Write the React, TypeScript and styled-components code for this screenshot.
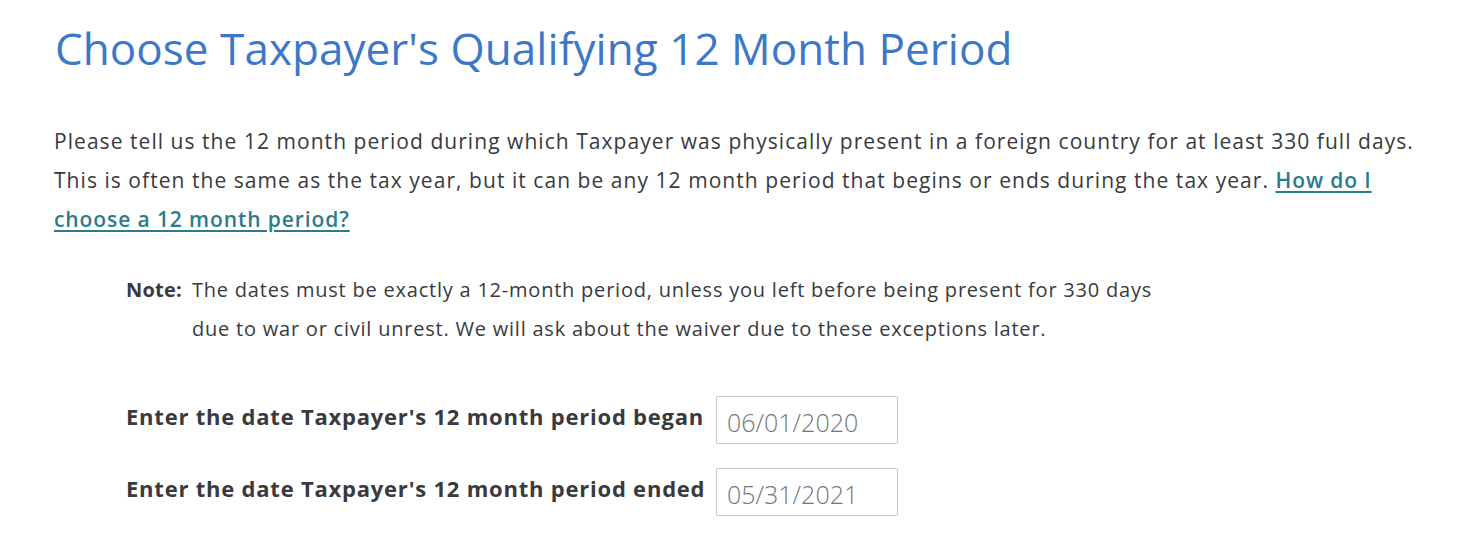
import styled, { createGlobalStyle } from "styled-components";

const GlobalStyle = createGlobalStyle`
    body {
        margin: 0;
        background: #ffffff;
        font-family: "Open Sans", Lato, "Liberation Sans", sans-serif;
        color: #393a3d;
    }
`;

const Page = styled.main`
    padding: 18px 54px 0;
`;

const Title = styled.h1`
    margin: 0;
    font-size: 44px;
    font-weight: 400;
    line-height: 60px;
    letter-spacing: 0.05px;
    color: #3d78c8;
    padding-left: 1px;
`;

const Intro = styled.p`
    margin: 44px 0 0;
    max-width: 1366px;
    font-size: 21px;
    line-height: 39px;
    letter-spacing: 1.05px;
    color: #393a3d;
`;

const HelpLink = styled.a`
    color: #2c7b8a;
    font-weight: 600;
    letter-spacing: 0.9px;
    text-decoration: underline;
    text-underline-offset: 3px;
    cursor: pointer;
`;

const Note = styled.div`
    display: grid;
    grid-template-columns: 66px 975px;
    margin: 31px 0 0 72px;
    font-size: 20px;
    line-height: 39px;
    letter-spacing: 0.78px;
`;

const NoteLabel = styled.strong`
    font-weight: 700;
    letter-spacing: 0.2px;
    color: #393a3d;
`;

const Fields = styled.div`
    display: flex;
    flex-direction: column;
    gap: 24px;
    margin: 48px 0 0 72px;
`;

const FieldRow = styled.label`
    display: grid;
    grid-template-columns: 590px 182px;
    align-items: center;
`;

const FieldLabel = styled.span`
    font-size: 22px;
    font-weight: 700;
    letter-spacing: 0.78px;
    color: #393a3d;
    margin-top: -8px;
`;

const DateInput = styled.input`
    box-sizing: border-box;
    width: 182px;
    height: 48px;
    padding: 4px 10px 0;
    border: 1px solid #c4c5c8;
    border-radius: 2px;
    font-family: inherit;
    font-size: 25px;
    font-weight: 300;
    color: #75767c;
    outline: none;
`;

const fields = [
    { label: "Enter the date Taxpayer's 12 month period began", value: "06/01/2020" },
    { label: "Enter the date Taxpayer's 12 month period ended", value: "05/31/2021" },
];

export default function App() {
    return (
        <>
            <GlobalStyle />
            <Page>
                <Title>Choose Taxpayer's Qualifying 12 Month Period</Title>
                <Intro>
                    Please tell us the 12 month period during which Taxpayer was physically present in a foreign
                    country for at least 330 full days. This is often the same as the tax year, but it can be any
                    12 month period that begins or ends during the tax year.{" "}
                    <HelpLink>How do I choose a 12 month period?</HelpLink>
                </Intro>
                <Note>
                    <NoteLabel>Note:</NoteLabel>
                    <span>
                        The dates must be exactly a 12-month period, unless you left before being present for 330
                        days due to war or civil unrest. We will ask about the waiver due to these exceptions later.
                    </span>
                </Note>
                <Fields>
                    {fields.map((f) => (
                        <FieldRow key={f.value}>
                            <FieldLabel>{f.label}</FieldLabel>
                            <DateInput defaultValue={f.value} />
                        </FieldRow>
                    ))}
                </Fields>
            </Page>
        </>
    );
}
